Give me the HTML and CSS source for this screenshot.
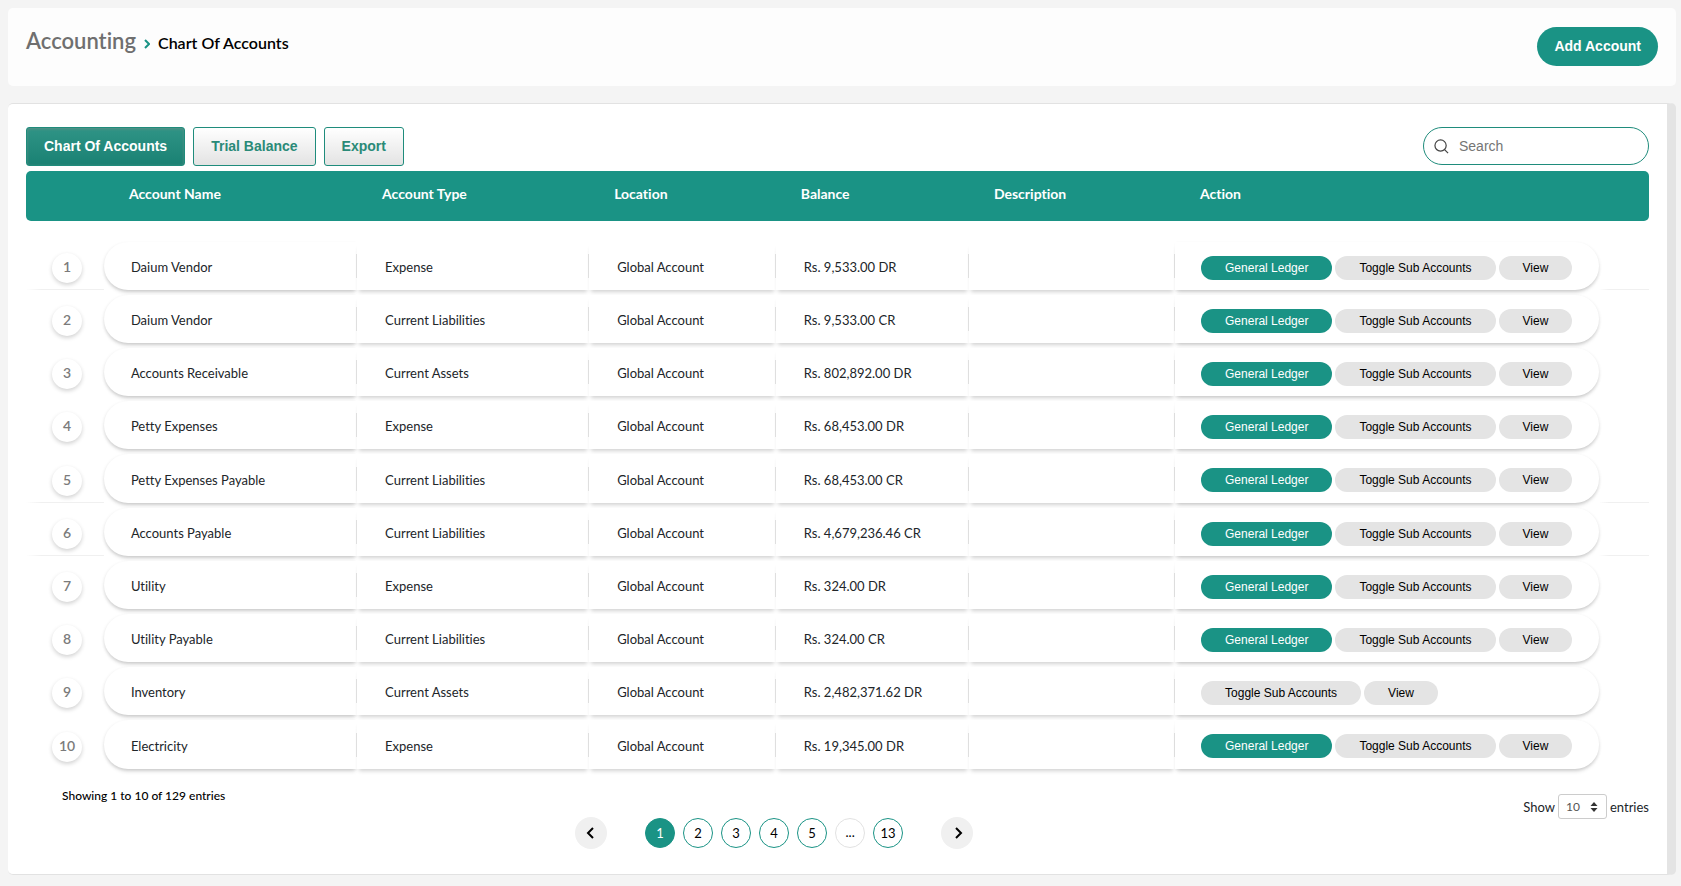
FILE: index.html
```html
<!DOCTYPE html>
<html lang="en">
<head>
<meta charset="utf-8">
<title>Chart Of Accounts</title>
<link rel="stylesheet" href="styles.css">
</head>
<body>
<header class="page-head">
  <nav class="crumbs" aria-label="Breadcrumb">
    <h1 class="crumb-root">Accounting</h1>
    <svg class="crumb-sep" viewBox="0 0 6 10" aria-hidden="true"><path d="M1 1l4 4-4 4"/></svg>
    <span class="crumb-page">Chart Of Accounts</span>
  </nav>
  <button class="add" type="button">Add Account</button>
</header>
<main class="card">
  <div class="toolbar">
    <div class="tabs">
      <button class="tab tab-active" type="button">Chart Of Accounts</button>
      <button class="tab" type="button">Trial Balance</button>
      <button class="tab" type="button">Export</button>
    </div>
    <label class="search">
      <svg class="search-icon" viewBox="0 0 16 16" aria-hidden="true"><circle cx="7" cy="7" r="6"/><path d="M11.3 11.3L15 15"/></svg>
      <input class="search-input" type="search" placeholder="Search" aria-label="Search">
    </label>
  </div>
  <table class="accounts">
    <colgroup><col class="c-num"><col class="c-name"><col class="c-type"><col class="c-loc"><col class="c-bal"><col class="c-desc"><col class="c-act"><col></colgroup>
    <thead>
      <tr><th></th><th>Account Name</th><th>Account Type</th><th>Location</th><th>Balance</th><th>Description</th><th>Action</th><th></th></tr>
    </thead>
    <tbody>
      <tr class="ruled"><td class="edge"><span class="num">1</span></td><td class="first">Daium Vendor</td><td>Expense</td><td>Global Account</td><td>Rs. 9,533.00 DR</td><td></td><td class="last"><div class="actions"><button class="pill pill-main" type="button">General Ledger</button><button class="pill" type="button">Toggle Sub Accounts</button><button class="pill" type="button">View</button></div></td><td class="edge"></td></tr>
      <tr><td class="edge"><span class="num">2</span></td><td class="first">Daium Vendor</td><td>Current Liabilities</td><td>Global Account</td><td>Rs. 9,533.00 CR</td><td></td><td class="last"><div class="actions"><button class="pill pill-main" type="button">General Ledger</button><button class="pill" type="button">Toggle Sub Accounts</button><button class="pill" type="button">View</button></div></td><td class="edge"></td></tr>
      <tr><td class="edge"><span class="num">3</span></td><td class="first">Accounts Receivable</td><td>Current Assets</td><td>Global Account</td><td>Rs. 802,892.00 DR</td><td></td><td class="last"><div class="actions"><button class="pill pill-main" type="button">General Ledger</button><button class="pill" type="button">Toggle Sub Accounts</button><button class="pill" type="button">View</button></div></td><td class="edge"></td></tr>
      <tr><td class="edge"><span class="num">4</span></td><td class="first">Petty Expenses</td><td>Expense</td><td>Global Account</td><td>Rs. 68,453.00 DR</td><td></td><td class="last"><div class="actions"><button class="pill pill-main" type="button">General Ledger</button><button class="pill" type="button">Toggle Sub Accounts</button><button class="pill" type="button">View</button></div></td><td class="edge"></td></tr>
      <tr class="ruled"><td class="edge"><span class="num">5</span></td><td class="first">Petty Expenses Payable</td><td>Current Liabilities</td><td>Global Account</td><td>Rs. 68,453.00 CR</td><td></td><td class="last"><div class="actions"><button class="pill pill-main" type="button">General Ledger</button><button class="pill" type="button">Toggle Sub Accounts</button><button class="pill" type="button">View</button></div></td><td class="edge"></td></tr>
      <tr class="ruled"><td class="edge"><span class="num">6</span></td><td class="first">Accounts Payable</td><td>Current Liabilities</td><td>Global Account</td><td>Rs. 4,679,236.46 CR</td><td></td><td class="last"><div class="actions"><button class="pill pill-main" type="button">General Ledger</button><button class="pill" type="button">Toggle Sub Accounts</button><button class="pill" type="button">View</button></div></td><td class="edge"></td></tr>
      <tr><td class="edge"><span class="num">7</span></td><td class="first">Utility</td><td>Expense</td><td>Global Account</td><td>Rs. 324.00 DR</td><td></td><td class="last"><div class="actions"><button class="pill pill-main" type="button">General Ledger</button><button class="pill" type="button">Toggle Sub Accounts</button><button class="pill" type="button">View</button></div></td><td class="edge"></td></tr>
      <tr><td class="edge"><span class="num">8</span></td><td class="first">Utility Payable</td><td>Current Liabilities</td><td>Global Account</td><td>Rs. 324.00 CR</td><td></td><td class="last"><div class="actions"><button class="pill pill-main" type="button">General Ledger</button><button class="pill" type="button">Toggle Sub Accounts</button><button class="pill" type="button">View</button></div></td><td class="edge"></td></tr>
      <tr><td class="edge"><span class="num">9</span></td><td class="first">Inventory</td><td>Current Assets</td><td>Global Account</td><td>Rs. 2,482,371.62 DR</td><td></td><td class="last"><div class="actions"><button class="pill" type="button">Toggle Sub Accounts</button><button class="pill" type="button">View</button></div></td><td class="edge"></td></tr>
      <tr><td class="edge"><span class="num">10</span></td><td class="first">Electricity</td><td>Expense</td><td>Global Account</td><td>Rs. 19,345.00 DR</td><td></td><td class="last"><div class="actions"><button class="pill pill-main" type="button">General Ledger</button><button class="pill" type="button">Toggle Sub Accounts</button><button class="pill" type="button">View</button></div></td><td class="edge"></td></tr>
    </tbody>
  </table>
  <footer class="table-foot">
    <p class="summary">Showing 1 to 10 of 129 entries</p>
    <nav class="pager" aria-label="Pagination">
      <button class="arrow" type="button" aria-label="Previous"><svg class="arrow-icon" viewBox="0 0 12 12" aria-hidden="true"><path d="M8 1L3 6l5 5"/></svg></button>
      <div class="pages">
        <button class="page page-active" type="button">1</button>
        <button class="page" type="button">2</button>
        <button class="page" type="button">3</button>
        <button class="page" type="button">4</button>
        <button class="page" type="button">5</button>
        <span class="page page-gap">...</span>
        <button class="page" type="button">13</button>
      </div>
      <button class="arrow" type="button" aria-label="Next"><svg class="arrow-icon" viewBox="0 0 12 12" aria-hidden="true"><path d="M5 1l5 5-5 5"/></svg></button>
    </nav>
    <div class="length">
      <label for="size">Show</label>
      <span class="select-wrap">
        <select class="select" id="size"><option>10</option><option>25</option><option>50</option><option>100</option></select>
        <svg class="select-icon" viewBox="0 0 8 10" aria-hidden="true"><path d="M4 0l3.5 4h-7zM4 10L.5 6h7z"/></svg>
      </span>
      <span>entries</span>
    </div>
  </footer>
</main>
</body>
</html>
```

FILE: styles.css
```css
* { box-sizing: border-box; }

body {
  margin: 0;
  padding: 8px 5px 12px 8px;
  background: #f4f4f4;
  color: #212529;
  font: 13px/20px Lato, "Open Sans", sans-serif;
  font-variant-ligatures: none;
}

button, input { font-family: "Liberation Sans", Arial, sans-serif; }

.page-head {
  display: flex;
  justify-content: space-between;
  align-items: flex-start;
  min-height: 78px;
  margin-bottom: 17px;
  padding: 19px 18px;
  border-radius: 5px;
  background: #fdfdfd;
}

.crumbs { display: flex; align-items: baseline; gap: 8px; }
.crumb-root { margin: 0; color: #6f6f6f; font-size: 22px; line-height: 28px; font-weight: 600; }
.crumb-sep { width: 6px; height: 10px; fill: none; stroke: #1a9385; stroke-width: 2; }
.crumb-page { color: #000; font-size: 16px; font-weight: 600; }

.add {
  height: 39px;
  padding: 0 17px 2px;
  border: 0;
  border-radius: 20px;
  background: #1a9385;
  color: #fff;
  font-size: 14px;
  font-weight: 700;
}

.card {
  padding: 23px 18px 25px;
  border: 1px solid #e2e2e2;
  border-left-width: 0;
  border-right: 9px solid #e4e4e4;
  border-radius: 5px;
  background: #fff;
}

.toolbar { display: flex; justify-content: space-between; }
.tabs { display: flex; gap: 8px; }
.tab {
  height: 39px;
  padding: 0 17px 2px;
  border: 1px solid #1f8c7c;
  border-radius: 3px;
  background: linear-gradient(#fff, #e3e3e3);
  color: #2a8a78;
  font-size: 14px;
  font-weight: 700;
}
.tab-active {
  background: linear-gradient(#2f9486, #1a8173);
  box-shadow: inset 0 1px 3px #5f8f86;
  color: #fff;
}

.search {
  display: flex;
  align-items: center;
  gap: 10px;
  width: 226px;
  height: 38px;
  padding: 0 10px;
  border: 1px solid #1f8c7c;
  border-radius: 19px;
}
.search-icon { flex: none; width: 15px; height: 15px; fill: none; stroke: #444; stroke-width: 1.3; }
.search-input {
  flex: 1;
  min-width: 0;
  padding: 0;
  border: 0;
  outline: 0;
  background: none;
  font-size: 14px;
}
.search-input::placeholder { color: #757575; }

.accounts { width: 100%; table-layout: fixed; border-collapse: separate; border-spacing: 0 5px; }
.c-num { width: 4.8%; }
.c-name { width: 15.6%; }
.c-type { width: 14.3%; }
.c-loc { width: 11.5%; }
.c-bal { width: 11.9%; }
.c-desc { width: 12.7%; }
.c-act { width: 26.1%; }

.accounts th {
  height: 50px;
  padding: 0 25px 4px;
  background: #1a9385;
  color: #fff;
  font-size: 14px;
  font-weight: 700;
  text-align: left;
}
.accounts th:first-child { border-radius: 5px 0 0 5px; }
.accounts th:last-child { border-radius: 0 5px 5px 0; }

.accounts tbody::before { content: ""; display: table-row; height: 11px; }
.accounts td {
  height: 48px;
  padding: 2px 0 0 28px;
  background: linear-gradient(#e4e4e4, #e4e4e4) right center / 1px 24px no-repeat, #fff;
  box-shadow: 0 4px 4px -2px rgba(0, 0, 0, .18);
  white-space: nowrap;
}
.accounts tr:nth-child(5n) td { height: 49px; }
.accounts .first {
  padding-left: 27px;
  border-radius: 24px 0 0 24px;
  box-shadow: 0 4px 4px -2px rgba(0, 0, 0, .18), -1px 1px 3px rgba(0, 0, 0, .07);
}
.accounts .last {
  padding-top: 3px;
  padding-left: 26px;
  border-radius: 0 24px 24px 0;
  background: #fff;
  box-shadow: 0 4px 4px -2px rgba(0, 0, 0, .18), 1px 1px 3px rgba(0, 0, 0, .07);
}
.accounts .edge { padding-top: 4px; padding-left: 0; background: none; box-shadow: none; }
.accounts .ruled .edge { background: linear-gradient(90deg, transparent, #f0f0f0 20%) bottom / 100% 1px no-repeat; }

.num {
  display: block;
  width: 30px;
  height: 30px;
  margin: 0 0 0 26px;
  border-radius: 50%;
  background: #fff;
  box-shadow: 0 2px 4px rgba(0, 0, 0, .18);
  color: #7b7b7b;
  font-size: 14px;
  font-weight: 600;
  line-height: 28px;
  text-align: center;
}

.actions { display: flex; gap: 3px; }
.pill {
  height: 24px;
  padding: 0 24px;
  border: 0;
  border-radius: 12px;
  background: #e4e4e4;
  color: #000;
  font-size: 12px;
}
.pill-main { background: #1a9385; color: #fff; }

.table-foot { display: grid; grid-template-columns: 13fr auto 16fr; align-items: start; }
.summary {
  margin: 14px 0 0;
  padding-left: 36px;
  color: #000;
  font-size: 12px;
  line-height: 16px;
  font-weight: 500;
}

.pager { display: flex; align-items: center; gap: 38px; margin-top: 43px; }
.pages { display: flex; gap: 8px; }
.arrow {
  display: flex;
  align-items: center;
  justify-content: center;
  width: 32px;
  height: 32px;
  padding: 0;
  border: 0;
  border-radius: 50%;
  background: #f0f0f0;
}
.arrow-icon { width: 12px; height: 12px; fill: none; stroke: #000; stroke-width: 2; }
.page {
  width: 30px;
  height: 30px;
  padding: 0;
  border: 1px solid #1a9385;
  border-radius: 50%;
  background: #fff;
  color: #000;
  font: 13px/26px Lato, "Open Sans", sans-serif;
  text-align: center;
}
.page-active { background: #1a9385; color: #fff; }
.page-gap { border-color: #e2e2e2; }

.length { display: flex; justify-content: flex-end; align-items: center; gap: 3px; margin-top: 20px; }
.select-wrap { position: relative; display: flex; }
.select {
  width: 49px;
  height: 25px;
  padding: 0 7px;
  appearance: none;
  border: 1px solid #ccc;
  border-radius: 3px;
  background: #fff;
  color: #555;
  font: 12px Lato, "Open Sans", sans-serif;
}
.select-icon {
  position: absolute;
  top: 8px;
  right: 9px;
  width: 8px;
  height: 10px;
  fill: #333;
  pointer-events: none;
}
```
